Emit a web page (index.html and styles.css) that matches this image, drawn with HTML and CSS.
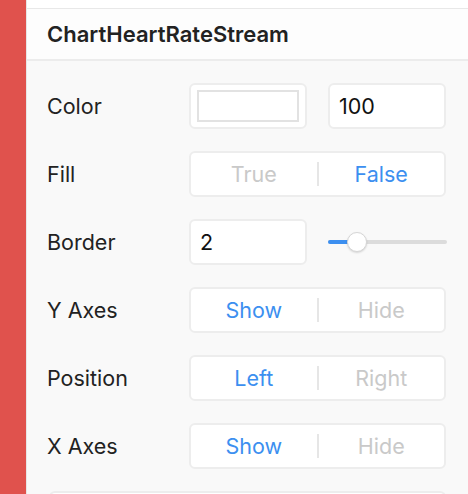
FILE: index.html
```html
<!DOCTYPE html>
<html>
<head>
<meta charset="utf-8">
<link rel="stylesheet" href="styles.css">
</head>
<body>
<div class="app">
  <aside class="sidebar"></aside>
  <main class="panel">
    <div class="topstrip"></div>
    <header class="title">ChartHeartRateStream</header>
    <section class="props">
      <div class="row">
        <div class="label">Color</div>
        <div class="controls">
          <div class="box swatch-box"><div class="swatch"></div></div>
          <div class="box input">100</div>
        </div>
      </div>
      <div class="row">
        <div class="label">Fill</div>
        <div class="controls">
          <div class="box seg">
            <span class="opt off">True</span>
            <span class="sep"></span>
            <span class="opt on">False</span>
          </div>
        </div>
      </div>
      <div class="row">
        <div class="label">Border</div>
        <div class="controls">
          <div class="box input">2</div>
          <div class="slider">
            <div class="track"><div class="fill" style="width:22px"></div></div>
            <div class="knob" style="left:19px"></div>
          </div>
        </div>
      </div>
      <div class="row">
        <div class="label">Y Axes</div>
        <div class="controls">
          <div class="box seg">
            <span class="opt on">Show</span>
            <span class="sep"></span>
            <span class="opt off">Hide</span>
          </div>
        </div>
      </div>
      <div class="row">
        <div class="label">Position</div>
        <div class="controls">
          <div class="box seg">
            <span class="opt on">Left</span>
            <span class="sep"></span>
            <span class="opt off">Right</span>
          </div>
        </div>
      </div>
      <div class="row">
        <div class="label">X Axes</div>
        <div class="controls">
          <div class="box seg">
            <span class="opt on">Show</span>
            <span class="sep"></span>
            <span class="opt off">Hide</span>
          </div>
        </div>
      </div>
      <div class="box wide"></div>
    </section>
  </main>
</div>
</body>
</html>
```

FILE: styles.css
```css
* { box-sizing: border-box; }
html, body {
  margin: 0;
  padding: 0;
  height: 100%;
  overflow: hidden;
}
body {
  font-family: Inter, "Noto Sans", sans-serif;
  color: #222;
  background: #f9f9f9;
}
.app {
  display: flex;
  height: 494px;
  overflow: hidden;
}
.sidebar {
  flex: none;
  width: 27px;
  background: #e0524d;
  border-right: 1px solid #e6e6e6;
}
.panel {
  flex: 1;
  display: flex;
  flex-direction: column;
  background: #f9f9f9;
  overflow: hidden;
}
.topstrip {
  height: 9px;
  background: #fff;
  border-bottom: 1px solid #e8e8e8;
  flex: none;
}
.title {
  height: 52px;
  flex: none;
  background: #fdfdfd;
  border-bottom: 2px solid #ececec;
  padding-left: 20px;
  display: flex;
  align-items: center;
  font-size: 22px;
  font-weight: 600;
  color: #222;
}
.props {
  padding: 22px 22px 0 20px;
  display: flex;
  flex-direction: column;
  gap: 22px;
}
.row {
  display: flex;
  align-items: center;
  height: 46px;
  flex: none;
}
.label {
  width: 142px;
  flex: none;
  font-size: 21.5px;
  color: #222;
}
.controls {
  flex: 1;
  display: flex;
  align-items: center;
  gap: 21px;
}
.box {
  height: 46px;
  background: #fff;
  border: 2px solid #ededed;
  border-radius: 6px;
}
.swatch-box, .input {
  width: 118px;
  flex: none;
}
.swatch-box {
  padding: 5px 6px;
}
.swatch {
  width: 100%;
  height: 100%;
  border: 2px solid #e2e2e2;
  background: #fff;
}
.input {
  display: flex;
  align-items: center;
  padding-left: 9px;
  font-size: 21.5px;
  color: #111;
}
.seg {
  flex: 1;
  display: flex;
  align-items: center;
}
.opt {
  flex: 1;
  text-align: center;
  font-size: 21.5px;
}
.opt.on { color: #3c8ff0; }
.opt.off { color: #c9c9c9; }
.sep {
  width: 2px;
  height: 24px;
  background: #e6e6e6;
  flex: none;
}
.slider {
  position: relative;
  width: 119px;
  height: 22px;
  display: flex;
  align-items: center;
}
.track {
  width: 100%;
  height: 4px;
  border-radius: 2px;
  background: #dcdcdc;
  overflow: hidden;
}
.fill {
  height: 100%;
  background: #3c8ff0;
}
.knob {
  position: absolute;
  top: 1px;
  width: 20px;
  height: 20px;
  border-radius: 50%;
  background: #fff;
  border: 1px solid #d6d6d6;
  box-shadow: 0 1px 2px rgba(0,0,0,0.15);
}
.wide {
  margin-left: 2px;
  width: 397px;
  flex: none;
}
```
